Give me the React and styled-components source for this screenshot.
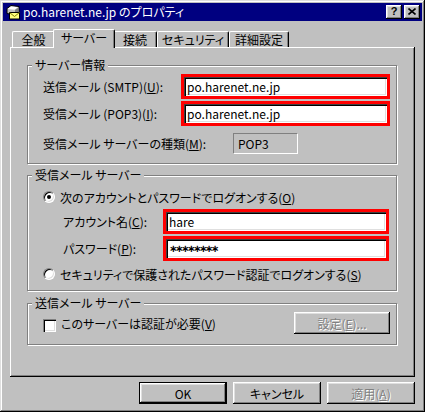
import React from 'react';
import styled, { createGlobalStyle, css } from 'styled-components';

const Global = createGlobalStyle`
  html, body { margin: 0; padding: 0; background: #c0c0c0; }
  body {
    font-family: "Noto Sans CJK JP", "Noto Sans", sans-serif;
    font-size: 12px;
    color: #000;
    font-feature-settings: "palt";
  }
`;

const raised = css`
  box-shadow: inset -1px -1px #000, inset 1px 1px #dfdfdf, inset -2px -2px #808080, inset 2px 2px #fff;
`;

const Window = styled.div`
  box-sizing: border-box;
  width: 425px;
  height: 412px;
  padding: 3px;
  background: #c0c0c0;
  ${raised};
  display: flex;
  flex-direction: column;
`;

const TitleBar = styled.div`
  height: 18px;
  flex: none;
  background: #000080;
  color: #fff;
  display: flex;
  align-items: center;
  padding: 0 2px;
  gap: 2px;
`;

const TitleText = styled.span`
  flex: 1;
  font-size: 12px;
  line-height: 18px;
  white-space: nowrap;
`;

const CaptionButtons = styled.div`
  display: flex;
  gap: 2px;
`;

const CaptionButton = styled.div`
  box-sizing: border-box;
  width: 16px;
  height: 14px;
  background: #c0c0c0;
  color: #000;
  box-shadow: inset -1px -1px #000, inset 1px 1px #fff, inset -2px -2px #808080, inset 2px 2px #dfdfdf;
  display: flex;
  align-items: center;
  justify-content: center;
  font-family: "Liberation Sans", sans-serif;
  font-weight: bold;
  font-size: 11px;
  line-height: 1;
  padding-bottom: 1px;
`;

const Body = styled.div`
  display: flex;
  flex-direction: column;
  padding: 0 7px;
`;

const TabStrip = styled.div`
  margin-top: 8px;
  height: 18px;
  display: flex;
  align-items: flex-end;
  padding-left: 2px;
  position: relative;
  z-index: 1;
`;

const Tab = styled.div`
  box-sizing: border-box;
  flex: none;
  width: ${p => p.$w}px;
  height: ${p => (p.$active ? 19 : 16)}px;
  margin: 0 ${p => (p.$active ? -2 : 0)}px ${p => (p.$active ? -1 : 0)}px;
  position: relative;
  z-index: ${p => (p.$active ? 2 : 1)};
  background: #c0c0c0;
  border-top: 1px solid #fff;
  border-left: 1px solid #fff;
  border-right: 1px solid #000;
  border-radius: 2px 2px 0 0;
  box-shadow: inset -1px 0 #808080;
  display: flex;
  align-items: ${p => (p.$active ? 'flex-start' : 'center')};
  padding-top: ${p => (p.$active ? 1 : 0)}px;
  justify-content: center;
  white-space: nowrap;
  line-height: 14px;
`;

const Panel = styled.div`
  box-sizing: border-box;
  height: 330px;
  padding: 11px 17px 0;
  background: #c0c0c0;
  box-shadow: inset -1px -1px #000, inset 1px 1px #fff, inset -2px -2px #808080;
  display: flex;
  flex-direction: column;
`;

const Group = styled.fieldset`
  box-sizing: border-box;
  width: 370px;
  margin: ${p => p.$mt || 0}px 0 0;
  padding: 0;
  min-inline-size: 0;
  border: 1px solid #808080;
  box-shadow: 1px 1px 0 #fff, inset 1px 1px 0 #fff;
`;

const Legend = styled.legend`
  margin-left: 4px;
  padding: 0 3px;
  line-height: 14px;
  font-size: 12px;
  background: #c0c0c0;
`;

const GroupBody = styled.div`
  padding: ${p => p.$pt}px 6px ${p => p.$pb}px 15px;
  display: flex;
  flex-direction: column;
`;

const Row = styled.div`
  display: flex;
  align-items: center;
  height: ${p => p.$h}px;
  margin-top: ${p => p.$mt || 0}px;
  padding-left: ${p => p.$indent || 0}px;
  white-space: nowrap;
`;

const SpreadRow = styled(Row)`
  justify-content: space-between;
`;

const Label = styled.span`
  flex: none;
  width: ${p => p.$w}px;
  white-space: nowrap;
`;

const Highlight = styled.div`
  box-sizing: border-box;
  flex: none;
  width: ${p => p.$w}px;
  height: 25px;
  border: 3px solid #ff0000;
  display: flex;
`;

const Field = styled.div`
  flex: 1;
  background: #fff;
  box-shadow: inset 1px 1px #404040, inset 2px 2px #000, inset -1px -1px #fff, inset -2px -2px #dfdfdf;
  display: flex;
  align-items: center;
  padding: 0 2px 0 3px;
  white-space: nowrap;
  overflow: hidden;
`;

const Mask = styled.span`
  font-family: "DejaVu Sans", sans-serif;
  font-weight: bold;
  font-size: 10px;
  letter-spacing: -2.4px;
  line-height: 1;
`;

const ReadOnlyBox = styled.div`
  box-sizing: border-box;
  width: 65px;
  height: 21px;
  border: 1px solid;
  border-color: #808080 #fff #fff #808080;
  display: flex;
  align-items: center;
  padding-left: 4px;
`;

const Radio = styled.span`
  box-sizing: border-box;
  flex: none;
  width: 12px;
  height: 12px;
  border-radius: 50%;
  background: #fff;
  border: 1px solid;
  border-color: #808080 #fff #fff #808080;
  box-shadow: inset 1px 1px #000, inset -1px -1px #dfdfdf;
  display: flex;
  align-items: center;
  justify-content: center;
  margin-right: 5px;
  &::after {
    content: "";
    width: 4px;
    height: 4px;
    border-radius: 50%;
    background: #000;
    display: ${p => (p.$checked ? 'block' : 'none')};
  }
`;

const Check = styled.span`
  box-sizing: border-box;
  flex: none;
  width: 13px;
  height: 13px;
  background: #fff;
  box-shadow: inset 1px 1px #808080, inset 2px 2px #000, inset -1px -1px #fff, inset -2px -2px #dfdfdf;
  margin-right: 5px;
  margin-top: 4px;
`;

const CheckLabel = styled.span`
  display: flex;
  align-items: center;
`;

const Button = styled.button`
  box-sizing: border-box;
  flex: none;
  width: ${p => p.$w}px;
  height: 22px;
  padding: 0;
  margin: 0;
  font: inherit;
  font-size: 12px;
  background: #c0c0c0;
  color: #000;
  border: ${p => (p.$default ? '1px solid #000' : 'none')};
  box-shadow: inset -1px -1px #000, inset 1px 1px #fff, inset -2px -2px #808080, inset 2px 2px #dfdfdf;
  display: flex;
  align-items: center;
  justify-content: center;
  white-space: nowrap;
  ${p => p.disabled && css`
    color: #808080;
    text-shadow: 1px 1px 0 #fff;
  `}
`;

const ButtonBar = styled.div`
  display: flex;
  justify-content: flex-end;
  gap: 6px;
  margin-top: 5px;
`;

const U = styled.u`
  text-decoration: underline;
  text-underline-offset: 1px;
`;

const MailIcon = () => (
  <svg width="16" height="16" viewBox="0 0 16 16" style={{ flex: 'none' }}>
    <path d="M2 4.5 L6 1.5 L14 2.5 L14 8.5 L10 11 L2 9.5 Z" fill="#c0c0c0" stroke="#000" strokeWidth="1" />
    <path d="M2.5 5 L6 2.5 L13 3.3 L9.5 5.8 Z" fill="#fff" />
    <path d="M10 6 L13.5 3.5 L13.5 8 L10 10.5 Z" fill="#808080" />
    <rect x="4.5" y="8.5" width="10" height="6.5" fill="#ffff80" stroke="#000" strokeWidth="1" />
    <path d="M4.5 8.5 L9.5 12.5 L14.5 8.5" fill="none" stroke="#808000" strokeWidth="1" />
  </svg>
);

const CloseGlyph = () => (
  <svg width="8" height="7" viewBox="0 0 8 7">
    <path d="M0.5 0.5 L7.5 6.5 M7.5 0.5 L0.5 6.5" stroke="#000" strokeWidth="1.6" />
  </svg>
);

const tabs = [
  { label: '全般', w: 43 },
  { label: 'サーバー', w: 62, active: true },
  { label: '接続', w: 44 },
  { label: 'セキュリティ', w: 72 },
  { label: '詳細設定', w: 60 },
];

export default function App() {
  return (
    <>
      <Global />
      <Window>
        <TitleBar>
          <MailIcon />
          <TitleText>po.harenet.ne.jp のプロパティ</TitleText>
          <CaptionButtons>
            <CaptionButton>?</CaptionButton>
            <CaptionButton><CloseGlyph /></CaptionButton>
          </CaptionButtons>
        </TitleBar>
        <Body>
          <TabStrip>
            {tabs.map(t => (
              <Tab key={t.label} $w={t.w} $active={t.active}>{t.label}</Tab>
            ))}
          </TabStrip>
          <Panel>
            <Group>
              <Legend>サーバー情報</Legend>
              <GroupBody $pt={2} $pb={9}>
                <Row $h={25}>
                  <Label $w={138}>送信メール (SMTP)(<U>U</U>):</Label>
                  <Highlight $w={209}><Field>po.harenet.ne.jp</Field></Highlight>
                </Row>
                <Row $h={25} $mt={2}>
                  <Label $w={138}>受信メール (POP3)(<U>I</U>):</Label>
                  <Highlight $w={209}><Field>po.harenet.ne.jp</Field></Highlight>
                </Row>
                <Row $h={21} $mt={7}>
                  <Label $w={190}>受信メール サーバーの種類(<U>M</U>):</Label>
                  <ReadOnlyBox>POP3</ReadOnlyBox>
                </Row>
              </GroupBody>
            </Group>
            <Group $mt={4}>
              <Legend>受信メール サーバー</Legend>
              <GroupBody $pt={7} $pb={8}>
                <Row $h={16}>
                  <Radio $checked />
                  <span>次のアカウントとパスワードでログオンする(<U>O</U>)</span>
                </Row>
                <Row $h={25} $mt={4} $indent={20}>
                  <Label $w={100}>アカウント名(<U>C</U>):</Label>
                  <Highlight $w={226}><Field>hare</Field></Highlight>
                </Row>
                <Row $h={25} $mt={2} $indent={20}>
                  <Label $w={100}>パスワード(<U>P</U>):</Label>
                  <Highlight $w={226}><Field><Mask>∗∗∗∗∗∗∗∗</Mask></Field></Highlight>
                </Row>
                <Row $h={16} $mt={5}>
                  <Radio />
                  <span>セキュリティで保護されたパスワード認証でログオンする(<U>S</U>)</span>
                </Row>
              </GroupBody>
            </Group>
            <Group $mt={5}>
              <Legend>送信メール サーバー</Legend>
              <GroupBody $pt={2} $pb={10}>
                <SpreadRow $h={22}>
                  <CheckLabel>
                    <Check />
                    <span>このサーバーは認証が必要(<U>V</U>)</span>
                  </CheckLabel>
                  <Button $w={96} disabled>設定(<U>E</U>)...</Button>
                </SpreadRow>
              </GroupBody>
            </Group>
          </Panel>
          <ButtonBar>
            <Button $w={88} $default>OK</Button>
            <Button $w={88}>キャンセル</Button>
            <Button $w={88} disabled>適用(<U>A</U>)</Button>
          </ButtonBar>
        </Body>
      </Window>
    </>
  );
}
